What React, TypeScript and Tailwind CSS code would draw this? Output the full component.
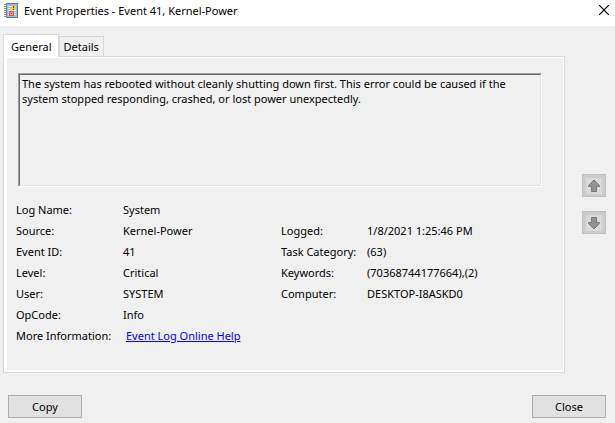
import { useState } from "react";

const MESSAGE =
  "The system has rebooted without cleanly shutting down first. This error could be caused if the system stopped responding, crashed, or lost power unexpectedly.";

const TABS = ["General", "Details"] as const;

const ROWS = [
  ["Log Name:", "System", "", ""],
  ["Source:", "Kernel-Power", "Logged:", "1/8/2021 1:25:46 PM"],
  ["Event ID:", "41", "Task Category:", "(63)"],
  ["Level:", "Critical", "Keywords:", "(70368744177664),(2)"],
  ["User:", "SYSTEM", "Computer:", "DESKTOP-I8ASKD0"],
  ["OpCode:", "Info", "", ""],
];

function EventLogIcon() {
  return (
    <svg width="16" height="16" viewBox="0 0 16 16" shapeRendering="crispEdges" aria-hidden="true">
      <rect x="2" y="0" width="12" height="15" fill="#667a9a" />
      <rect x="3" y="1" width="10" height="13" fill="#a3b9d3" />
      <path d="M4 3.5h8M4 5.5h8M4 7.5h8M4 9.5h8M4 11.5h8" stroke="#dfe9f4" />
      <path d="M0 1.5h3M0 3.5h3M0 5.5h3M0 7.5h3M0 9.5h3M0 11.5h3M0 13.5h3" stroke="#8c8c8c" />
      <path d="M9 2h1v1h1v2h1v2h-5v-2h1v-2h1z" fill="#f5cf1b" />
      <path d="M9 3h1v2h-1zM9 6h1v1h-1z" fill="#5c4a10" />
      <rect x="5" y="8" width="5" height="5" fill="#d9534f" />
      <path d="M6 9h3v3h-3z" fill="#e59a96" />
      <path d="M7 10h1v1h-1z" fill="#c62f2f" />
    </svg>
  );
}

function ArrowButton({ label, down }: { label: string; down?: boolean }) {
  return (
    <button
      type="button"
      disabled
      aria-label={label}
      className="grid h-[23px] w-6 place-items-center border border-[#bfbfbf] bg-[#cccccc]"
    >
      <svg width="16" height="16" viewBox="0 0 16 16" className="bg-[#dadada]" aria-hidden="true">
        <path
          d={
            down
              ? "M5.5 2.5h5v5h3v1l-5.5 5.5l-5.5 -5.5v-1h3z"
              : "M5.5 13.5h5v-5h3v-1l-5.5 -5.5l-5.5 5.5v1h3z"
          }
          fill="#929292"
          stroke="#7a7a7a"
        />
      </svg>
    </button>
  );
}

export default function App() {
  const [tab, setTab] = useState<(typeof TABS)[number]>("General");

  return (
    <div className="flex min-h-screen flex-col bg-[#f0f0f0] font-['Noto_Sans',sans-serif] text-[11px] leading-[15px] text-black">
      <header className="flex h-[26px] items-start justify-between bg-white pt-[3px] pr-[6px] pl-1">
        <div className="flex gap-1">
          <EventLogIcon />
          <h1>Event Properties - Event 41, Kernel-Power</h1>
        </div>
        <button type="button" aria-label="Close window" className="pt-[2px]">
          <svg width="10" height="10" viewBox="0 0 10 10" aria-hidden="true">
            <path d="M0 0l10 10M10 0l-10 10" stroke="#000" strokeWidth="1.2" />
          </svg>
        </button>
      </header>

      <main className="flex pt-2 pr-[9px] pl-[3px]">
        <div className="flex-1">
          <div role="tablist" className="flex items-end">
            {TABS.map((name) => (
              <button
                key={name}
                type="button"
                role="tab"
                aria-selected={tab === name}
                onClick={() => setTab(name)}
                className={
                  tab === name
                    ? "z-10 -mb-px h-[23px] border border-b-0 border-[#d9d9d9] bg-white pr-[6px] pl-[7px]"
                    : "h-5 border border-b-0 border-[#d9d9d9] px-1"
                }
              >
                {name}
              </button>
            ))}
          </div>

          <div role="tabpanel" className="border border-[#d9d9d9] bg-white pt-px pr-px pb-[2px] pl-[3px]">
            <div className="bg-[#f0f0f0] pt-[15px] pr-[21px] pb-6 pl-[9px]">
              <div className="ml-[2px] border border-t-[#a0a0a0] border-r-white border-b-white border-l-[#a0a0a0]">
                <textarea
                  readOnly
                  aria-label="Event description"
                  value={MESSAGE}
                  className="block h-28 w-full resize-none overflow-hidden border border-t-[#696969] border-r-[#e3e3e3] border-b-[#e3e3e3] border-l-[#696969] pt-px pl-[2px] outline-none"
                />
              </div>

              <dl className="mt-3 grid grid-cols-[107px_158px_86px_1fr] leading-[21px] whitespace-nowrap">
                {ROWS.map(([label, value, label2, value2]) => (
                  <div key={label} className="contents">
                    <dt>{label}</dt>
                    <dd>{value}</dd>
                    <dt>{label2}</dt>
                    <dd>{value2}</dd>
                  </div>
                ))}
                <dt>More Information:</dt>
                <dd className="pl-[3px]">
                  <a href="#help" className="text-[#0000ff] underline">
                    Event Log Online Help
                  </a>
                </dd>
              </dl>
            </div>
          </div>
        </div>

        <div className="ml-[17px] flex flex-col gap-[14px] pt-[140px]">
          <ArrowButton label="Previous event" />
          <ArrowButton label="Next event" down />
        </div>
      </main>

      <footer className="mt-[22px] flex justify-between pr-[9px] pl-2">
        {["Copy", "Close"].map((name) => (
          <button
            key={name}
            type="button"
            className="h-[23px] w-[74px] border border-[#adadad] bg-[#e1e1e1]"
          >
            {name}
          </button>
        ))}
      </footer>
    </div>
  );
}
